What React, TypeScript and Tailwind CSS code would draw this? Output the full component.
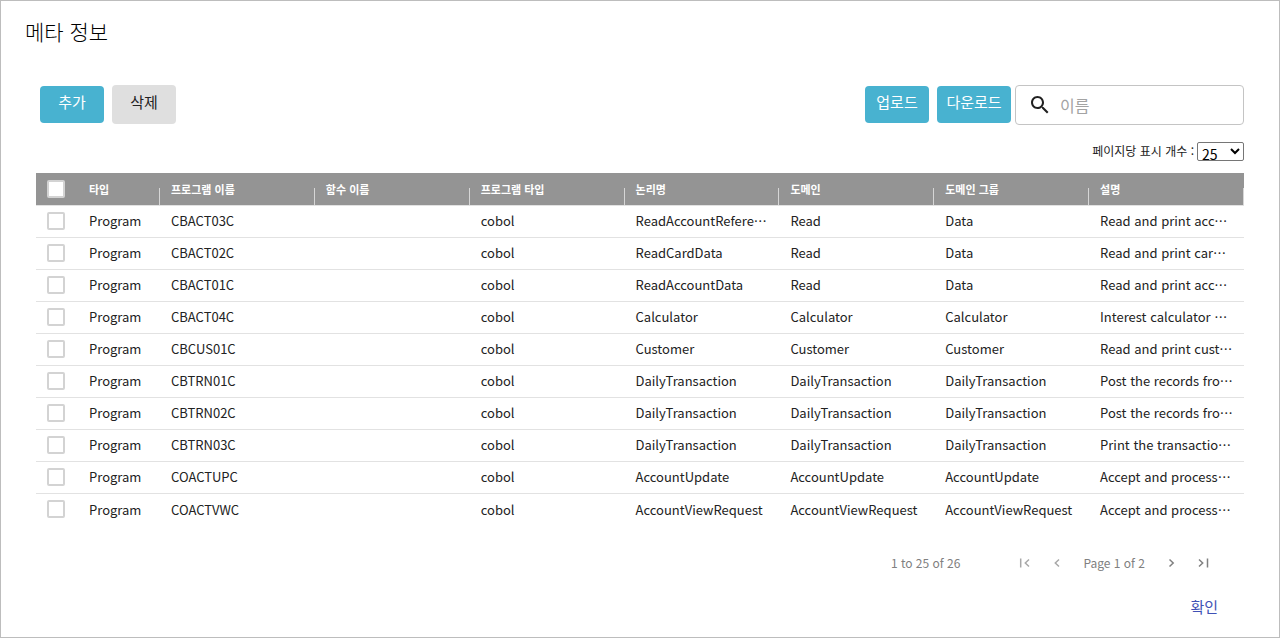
import React, { useState } from 'react';

interface MetaRow {
  type: string;
  programName: string;
  functionName: string;
  programType: string;
  logicalName: string;
  domain: string;
  domainGroup: string;
  description: string;
}

const COLUMNS: { key: keyof MetaRow; label: string }[] = [
  { key: 'type', label: '타입' },
  { key: 'programName', label: '프로그램 이름' },
  { key: 'functionName', label: '함수 이름' },
  { key: 'programType', label: '프로그램 타입' },
  { key: 'logicalName', label: '논리명' },
  { key: 'domain', label: '도메인' },
  { key: 'domainGroup', label: '도메인 그룹' },
  { key: 'description', label: '설명' },
];

const program = (
  programName: string,
  logicalName: string,
  domain: string,
  domainGroup: string,
  description: string
): MetaRow => ({
  type: 'Program',
  programName,
  functionName: '',
  programType: 'cobol',
  logicalName,
  domain,
  domainGroup,
  description,
});

const ROWS: MetaRow[] = [
  program('CBACT03C', 'ReadAccountReferenceData', 'Read', 'Data', 'Read and print account cross reference data file'),
  program('CBACT02C', 'ReadCardData', 'Read', 'Data', 'Read and print card data file'),
  program('CBACT01C', 'ReadAccountData', 'Read', 'Data', 'Read and print account data file'),
  program('CBACT04C', 'Calculator', 'Calculator', 'Calculator', 'Interest calculator program'),
  program('CBCUS01C', 'Customer', 'Customer', 'Customer', 'Read and print customer data file'),
  program('CBTRN01C', 'DailyTransaction', 'DailyTransaction', 'DailyTransaction', 'Post the records from daily transaction file'),
  program('CBTRN02C', 'DailyTransaction', 'DailyTransaction', 'DailyTransaction', 'Post the records from daily transaction file'),
  program('CBTRN03C', 'DailyTransaction', 'DailyTransaction', 'DailyTransaction', 'Print the transaction detail report'),
  program('COACTUPC', 'AccountUpdate', 'AccountUpdate', 'AccountUpdate', 'Accept and process account update'),
  program('COACTVWC', 'AccountViewRequest', 'AccountViewRequest', 'AccountViewRequest', 'Accept and process account view request'),
];

interface CheckboxProps {
  label: string;
  checked: boolean;
  onChange: () => void;
}

const Checkbox: React.FC<CheckboxProps> = ({ label, checked, onChange }) => (
  <input
    type="checkbox"
    aria-label={label}
    checked={checked}
    onChange={onChange}
    className="block w-[18px] h-[18px] appearance-none rounded-xs border-2 border-[#d3d3d3] bg-white checked:bg-[#48b2d0]"
  />
);

interface PageButtonProps {
  label: string;
  path: string;
  disabled?: boolean;
}

const PageButton: React.FC<PageButtonProps> = ({ label, path, disabled = false }) => (
  <button type="button" aria-label={label} disabled={disabled} className="text-[#808080] disabled:text-[#a8a8a8]">
    <svg viewBox="0 0 12 12" className="block w-3 h-3" fill="none" stroke="currentColor" strokeWidth="1.5">
      <path d={path} />
    </svg>
  </button>
);

const App: React.FC = () => {
  const [selected, setSelected] = useState<string[]>([]);
  const [search, setSearch] = useState('');
  const [pageSize, setPageSize] = useState('25');

  const allSelected = selected.length === ROWS.length;

  const toggleAll = () => {
    setSelected(allSelected ? [] : ROWS.map((row) => row.programName));
  };

  const toggleRow = (name: string) => {
    setSelected((prev) => (prev.includes(name) ? prev.filter((n) => n !== name) : [...prev, name]));
  };

  return (
    <div
      lang="ko"
      className="min-h-screen flex flex-col border border-[#bdbdbd] bg-white px-6 pt-4 pb-4 font-['Noto_Sans_CJK_KR',sans-serif] text-[#222]"
    >
      <h1 className="text-[21px] leading-7 font-light text-black">메타 정보</h1>

      <main className="mt-10 pl-[11px] pr-[11px]">
        {/* Toolbar */}
        <div className="flex items-start justify-between pl-1">
          <div className="flex items-start gap-2">
            <button type="button" className="mt-px w-16 h-[37px] rounded-sm bg-[#48b2d0] pb-1 text-[15px] text-white">
              추가
            </button>
            <button type="button" className="w-16 h-[39px] rounded-sm bg-[#dfdfdf] pb-1 text-[15px] text-[#222]">
              삭제
            </button>
          </div>
          <div className="flex items-start">
            <button type="button" className="mt-px mr-2 w-16 h-[37px] rounded-sm bg-[#48b2d0] pb-1 text-[15px] text-white">
              업로드
            </button>
            <button type="button" className="mt-px mr-1 w-[74px] h-[37px] rounded-sm bg-[#48b2d0] pb-1 text-[15px] text-white">
              다운로드
            </button>
            <div className="flex w-[229px] h-10 items-center rounded-sm border border-[#c4c4c4] pl-3">
              <svg viewBox="0 0 24 24" className="w-6 h-6 shrink-0" fill="#212121">
                <path d="M15.5 14h-.79l-.28-.27C15.41 12.59 16 11.11 16 9.5 16 5.91 13.09 3 9.5 3S3 5.91 3 9.5 5.91 16 9.5 16c1.61 0 3.09-.59 4.23-1.57l.27.28v.79l5 4.99L20.49 19l-4.99-5zm-6 0C7.01 14 5 11.99 5 9.5S7.01 5 9.5 5 14 7.01 14 9.5 11.99 14 9.5 14z" />
              </svg>
              <input
                type="text"
                aria-label="이름"
                placeholder="이름"
                value={search}
                onChange={(e) => setSearch(e.target.value)}
                className="min-w-0 flex-1 pl-2 text-base outline-none placeholder:text-[#a3a3a3]"
              />
            </div>
          </div>
        </div>

        {/* Page size */}
        <div className="mt-4 flex h-5 items-center justify-end gap-[3px]">
          <label htmlFor="page-size" className="text-xs">
            페이지당 표시 개수 :
          </label>
          <select
            id="page-size"
            value={pageSize}
            onChange={(e) => setPageSize(e.target.value)}
            className="w-[47px] h-[19px] rounded-xs border border-[#767676] bg-white text-sm leading-4 text-black"
          >
            <option>25</option>
            <option>50</option>
            <option>100</option>
          </select>
        </div>

        {/* Grid */}
        <table className="mt-3 w-full table-fixed border-collapse text-[13px]">
          <colgroup>
            <col className="w-[42px]" />
            <col className="w-[82px]" />
          </colgroup>
          <thead>
            <tr className="h-8 border-b border-[#e2e2e2] bg-[#949494] text-left text-[11px] text-white">
              <th className="p-0 pl-[11px]">
                <Checkbox label="전체 선택" checked={allSelected} onChange={toggleAll} />
              </th>
              {COLUMNS.map((col) => (
                <th key={col.key} className="relative p-0 pl-[11px] font-bold">
                  {col.label}
                  <span className="absolute right-0 bottom-0 w-px h-[17px] bg-[#d6d6d6]" />
                </th>
              ))}
            </tr>
          </thead>
          <tbody>
            {ROWS.map((row) => (
              <tr key={row.programName} className="h-8 border-b border-[#e2e2e2] last:border-b-0">
                <td className="p-0 pl-[11px]">
                  <Checkbox
                    label={row.programName}
                    checked={selected.includes(row.programName)}
                    onChange={() => toggleRow(row.programName)}
                  />
                </td>
                {COLUMNS.map((col) => (
                  <td key={col.key} className="py-0 px-[11px] truncate">
                    {row[col.key]}
                  </td>
                ))}
              </tr>
            ))}
          </tbody>
        </table>

        {/* Pagination */}
        <div className="mt-7 flex h-5 items-center justify-end pr-[35px] text-xs text-[#808080]">
          <span className="mr-[59px]">1 to 25 of 26</span>
          <div className="flex items-center gap-5">
            <PageButton label="첫 페이지" path="M1.7 1.5v9M10 2.5 6.3 6 10 9.5" disabled />
            <PageButton label="이전 페이지" path="M8 2.5 4.3 6 8 9.5" disabled />
            <span>Page 1 of 2</span>
            <PageButton label="다음 페이지" path="M4.5 2.5 8.2 6 4.5 9.5" />
            <PageButton label="마지막 페이지" path="M2 2.5 5.7 6 2 9.5M10.5 1.5v9" />
          </div>
        </div>

        <div className="mt-6 flex justify-end pr-[26px]">
          <button type="button" className="text-[15px] leading-5 text-[#3f51b5]">
            확인
          </button>
        </div>
      </main>
    </div>
  );
};

export default App;
